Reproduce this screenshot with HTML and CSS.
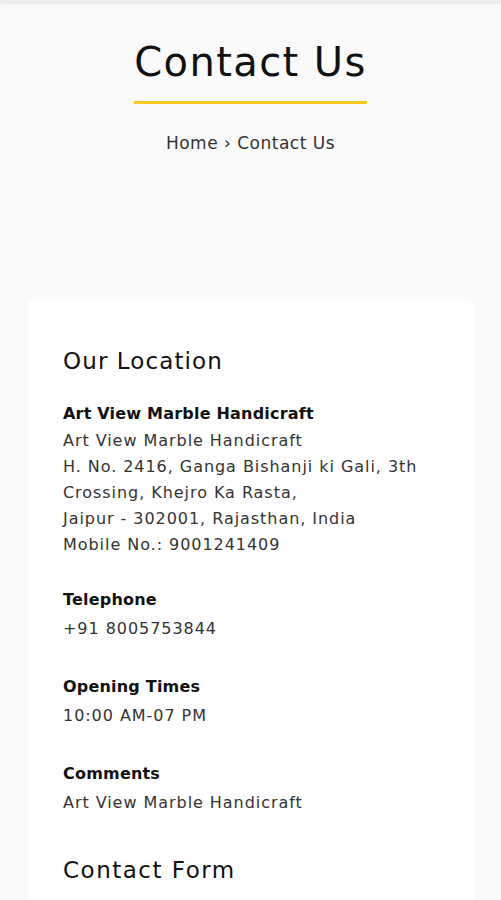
FILE: index.html
```html
<!DOCTYPE html>
<html lang="en">
<head>
<meta charset="utf-8">
<title>Contact Us</title>
<link rel="stylesheet" href="styles.css">
</head>
<body>
<div class="topbar"></div>
<section class="hero">
  <h1 class="hero-title">Contact Us</h1>
  <nav class="crumbs">Home › Contact Us</nav>
</section>
<main class="card">
  <h2 class="section-title">Our Location</h2>
  <div class="block first">
    <div class="label">Art View Marble Handicraft</div>
    <div class="text">Art View Marble Handicraft<br>H. No. 2416, Ganga Bishanji ki Gali, 3th Crossing, Khejro Ka Rasta,<br>Jaipur - 302001, Rajasthan, India<br>Mobile No.: 9001241409</div>
  </div>
  <div class="block">
    <div class="label">Telephone</div>
    <div class="text">+91 8005753844</div>
  </div>
  <div class="block">
    <div class="label">Opening Times</div>
    <div class="text">10:00 AM-07 PM</div>
  </div>
  <div class="block">
    <div class="label">Comments</div>
    <div class="text">Art View Marble Handicraft</div>
  </div>
  <h2 class="section-title form-title">Contact Form</h2>
</main>
</body>
</html>
```

FILE: styles.css
```css
html, body {
  margin: 0;
  padding: 0;
  background: #fafafa;
  font-family: "DejaVu Sans", "Open Sans", sans-serif;
  color: #1a1a1a;
}
.topbar {
  height: 3px;
  background: #ececec;
  box-shadow: 0 1px 3px rgba(0,0,0,0.08);
}
.hero {
  display: flex;
  flex-direction: column;
  align-items: center;
  padding-top: 33px;
}
.hero-title {
  margin: 0;
  font-size: 40px;
  line-height: 52px;
  font-weight: 400;
  letter-spacing: 1.4px;
  color: #111;
  padding-bottom: 13px;
  border-bottom: 3px solid #f6c823;
}
.crumbs {
  margin-top: 27px;
  font-size: 17px;
  line-height: 24px;
  letter-spacing: 0.5px;
  color: #333;
}
.card {
  margin: 144px 27px 0 28px;
  background: #fff;
  border-radius: 6px;
  padding: 46px 35px 20px 35px;
  min-height: 700px;
}
.section-title {
  margin: 0 0 24px;
  font-size: 23px;
  line-height: 32px;
  font-weight: 400;
  letter-spacing: 1.1px;
  color: #111;
}
.block {
  margin-bottom: 32px;
}
.block.first {
  margin-bottom: 29px;
}
.label {
  font-size: 16px;
  line-height: 26px;
  font-weight: 700;
  letter-spacing: 0.2px;
  color: #111;
  margin-bottom: 3px;
}
.first .label {
  margin-bottom: 1px;
}
.text {
  font-size: 16px;
  line-height: 26px;
  letter-spacing: 0.95px;
  color: #333;
  max-width: 360px;
}
.form-title {
  margin-top: 38px;
  letter-spacing: 1.5px;
}
```
